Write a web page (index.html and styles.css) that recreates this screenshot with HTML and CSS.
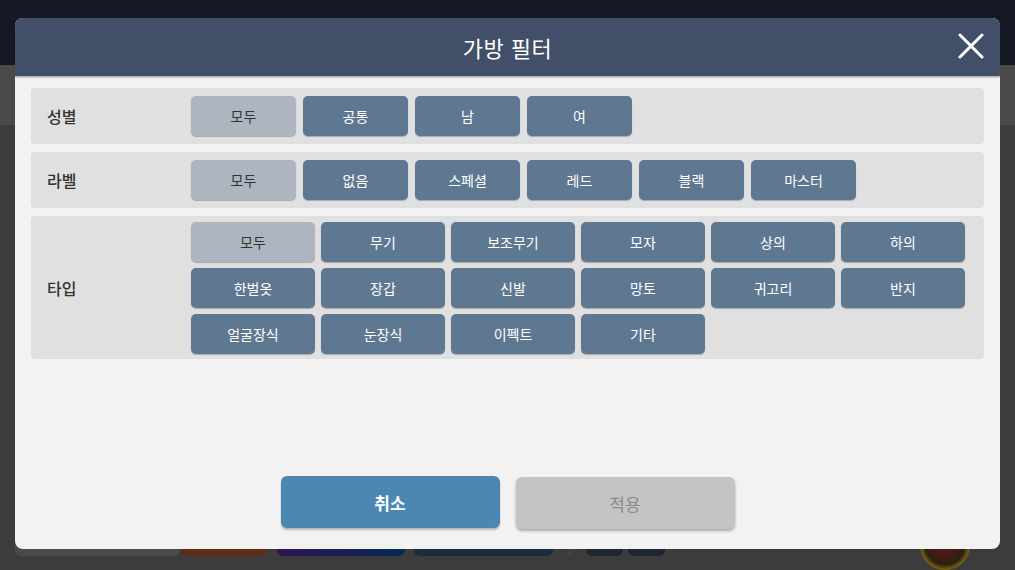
FILE: index.html
```html
<!DOCTYPE html>
<html lang="ko">
<head>
<meta charset="UTF-8" />
<meta name="viewport" content="width=device-width, initial-scale=1" />
<title>가방 필터</title>
<link rel="stylesheet" href="styles.css">
</head>
<body>

<div id="page">
  <div class="topbar"></div>
  <div class="subbar"></div>
  <div class="content">
    <div class="tiles">
      <div class="tile tile-panel"></div>
      <div class="tile tile-orange"></div>
      <div class="tile tile-purple"></div>
      <div class="tile tile-navy"></div>
      <div class="tile-divider"></div>
      <div class="tile tile-small"></div>
      <div class="tile tile-small"></div>
      <div class="tile-coin"></div>
    </div>
  </div>
</div>

<div id="modal">
  <div class="modal-header">
    <h1>가방 필터</h1>
    <button class="close-btn" aria-label="닫기">
      <svg width="26" height="26" viewBox="0 0 26 26">
        <path d="M2 2 L24 24 M24 2 L2 24" stroke="#fff" stroke-width="3" stroke-linecap="round" fill="none"/>
      </svg>
    </button>
  </div>

  <div class="modal-body">

    <div class="filter-row">
      <div class="filter-label">성별</div>
      <div class="options">
        <button class="opt selected">모두</button>
        <button class="opt">공통</button>
        <button class="opt">남</button>
        <button class="opt">여</button>
      </div>
    </div>

    <div class="filter-row">
      <div class="filter-label">라벨</div>
      <div class="options">
        <button class="opt selected">모두</button>
        <button class="opt">없음</button>
        <button class="opt">스페셜</button>
        <button class="opt">레드</button>
        <button class="opt">블랙</button>
        <button class="opt">마스터</button>
      </div>
    </div>

    <div class="filter-row row-type">
      <div class="filter-label">타입</div>
      <div class="options grid">
        <button class="opt selected">모두</button>
        <button class="opt">무기</button>
        <button class="opt">보조무기</button>
        <button class="opt">모자</button>
        <button class="opt">상의</button>
        <button class="opt">하의</button>
        <button class="opt">한벌옷</button>
        <button class="opt">장갑</button>
        <button class="opt">신발</button>
        <button class="opt">망토</button>
        <button class="opt">귀고리</button>
        <button class="opt">반지</button>
        <button class="opt">얼굴장식</button>
        <button class="opt">눈장식</button>
        <button class="opt">이펙트</button>
        <button class="opt">기타</button>
      </div>
    </div>

  </div>

  <div class="modal-footer">
    <button class="btn-cancel">취소</button>
    <button class="btn-apply">적용</button>
  </div>
</div>

</body>
</html>
```

FILE: styles.css
```css
body {
  margin: 0;
  font-family: "Noto Sans CJK KR", "Noto Sans", sans-serif;
  background: #3c3c3c;
  height: 570px;
  overflow: hidden;
}

/* background page */
.topbar {
  height: 65px;
  background: #131822;
}

.subbar {
  height: 60px;
  background: #4a4a4a;
}

.content {
  padding: 0 0 0 15px;
}

.tiles {
  display: flex;
  align-items: flex-end;
  margin-top: 384px;
  height: 47px;
}

.tile {
  height: 100%;
  border-radius: 0 0 6px 6px;
}

.tile-panel {
  width: 165px;
  background: #4a4a4a;
}

.tile-orange {
  width: 88px;
  background: #5e2e18;
}

.tile-purple {
  width: 128px;
  margin-left: 9px;
  background: linear-gradient(90deg, #2e1456, #052a57);
}

.tile-navy {
  width: 139px;
  margin-left: 9px;
  background: #1c2b3a;
}

.tile-divider {
  width: 2px;
  height: 100%;
  margin-left: 16px;
  background: #444;
}

.tile-small {
  width: 37px;
  height: 30px;
  margin-left: 15px;
  background: #1f2631;
}

.tile-small + .tile-small {
  margin-left: 5px;
}

.tile-coin {
  width: 50px;
  height: 50px;
  margin-left: 255px;
  margin-bottom: -14px;
  border-radius: 50%;
  background: radial-gradient(circle, #4a1a1a 30%, #2a2010 55%, #9a7a10 75%);
}

/* modal */
#modal {
  position: absolute;
  top: 18px;
  left: 15px;
  width: 985px;
  height: 531px;
  background: #f2f2f2;
  border-radius: 8px;
  overflow: hidden;
  display: flex;
  flex-direction: column;
}

.modal-header {
  position: relative;
  height: 58px;
  background: #415068;
  box-shadow: 0 1px 2px rgba(0,0,0,0.4);
  display: flex;
  justify-content: center;
  align-items: center;
}

.modal-header h1 {
  margin: 0;
  color: #fff;
  font-size: 22px;
  font-weight: 400;
  letter-spacing: 0.5px;
}

.close-btn {
  position: absolute;
  right: 16px;
  top: 15px;
  padding: 0;
  border: none;
  background: none;
  width: 26px;
  height: 26px;
  cursor: pointer;
}

.modal-body {
  padding: 12px 16px 0;
  display: flex;
  flex-direction: column;
  gap: 8px;
}

.filter-row {
  display: flex;
  align-items: center;
  background: #e0e0e0;
  border-radius: 4px;
  padding: 8px 0;
}

.row-type {
  padding: 6px 0 5px;
}

.filter-label {
  width: 144px;
  padding-left: 16px;
  font-size: 16px;
  font-weight: 500;
  color: #333;
}

.options {
  display: flex;
  gap: 7px;
}

.options.grid {
  display: grid;
  grid-template-columns: repeat(6, 124px);
  gap: 6px;
}

.opt {
  width: 105px;
  height: 40px;
  border: none;
  border-radius: 5px;
  background: #5f7892;
  color: #fff;
  font-family: inherit;
  font-size: 14px;
  font-weight: 400;
  box-shadow: 0 1px 1px rgba(0,0,0,0.25);
  cursor: pointer;
}

.grid .opt {
  width: 124px;
}

.opt.selected {
  background: #adb6c0;
  color: #333;
}

.modal-footer {
  margin-top: auto;
  padding-bottom: 20px;
  display: flex;
  justify-content: center;
  align-items: flex-end;
  gap: 16px;
}

.btn-cancel,
.btn-apply {
  width: 219px;
  height: 52px;
  border: none;
  border-radius: 6px;
  font-family: inherit;
  font-size: 17px;
  cursor: pointer;
}

.btn-cancel {
  margin-bottom: 1px;
  background: #4b87b0;
  color: #fff;
  font-weight: 700;
  box-shadow: 0 2px 2px rgba(0,0,0,0.25);
}

.btn-apply {
  background: #c4c4c4;
  color: #8a8a8a;
  font-weight: 400;
  box-shadow: 0 2px 3px rgba(0,0,0,0.3);
}
```
